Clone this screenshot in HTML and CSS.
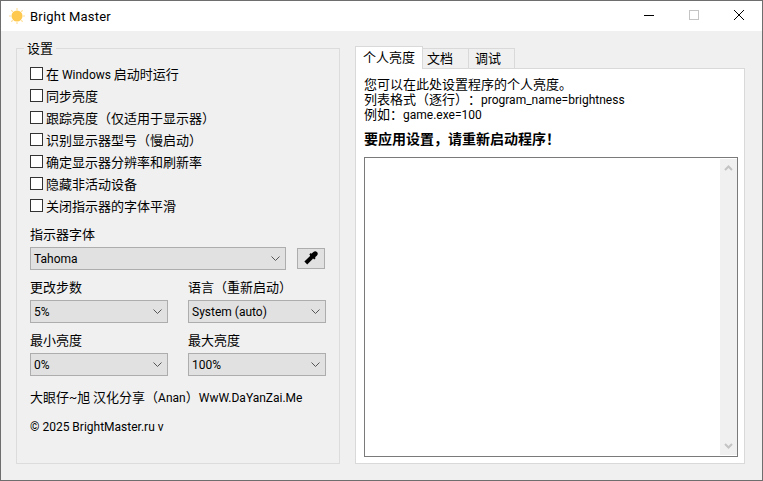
FILE: index.html
```html
<!DOCTYPE html>
<html lang="zh">
<head>
<meta charset="utf-8">
<title>Bright Master</title>
<link rel="stylesheet" href="styles.css">
</head>
<body>
<div class="window">
  <header class="titlebar">
    <svg class="sun" width="16" height="16" viewBox="0 0 16 16">
      <g stroke="#ffdd94" stroke-width="1.200" stroke-linecap="round">
        <path d="M8 .5v1M8 14.500v1M.5 8h1M14.500 8h1M2.700 2.700l.7.7M12.600 12.600l.7.7M2.700 13.300l.7-.7M12.600 3.400l.7-.7"/>
      </g>
      <circle cx="8" cy="8" r="5.500" fill="#ffc94f"/>
    </svg>
    <span class="app-name">Bright Master</span>
    <div class="controls">
      <svg width="12" height="12" viewBox="0 0 12 12"><path d="M1 6.500h10" stroke="#000" fill="none"/></svg>
      <svg width="12" height="12" viewBox="0 0 12 12"><rect x="1.500" y="1.500" width="9" height="9" stroke="#c4c4c4" fill="none"/></svg>
      <svg width="12" height="12" viewBox="0 0 12 12"><path d="M1 1l10 10M11 1L1 11" stroke="#000" fill="none"/></svg>
    </div>
  </header>
  <main class="content">
    <fieldset class="group">
      <legend class="group-title">设置</legend>
      <div class="checks">
        <label class="check"><input type="checkbox"><span>在 <span class="lat">Windows</span> 启动时运行</span></label>
        <label class="check"><input type="checkbox"><span>同步亮度</span></label>
        <label class="check"><input type="checkbox"><span>跟踪亮度（仅适用于显示器）</span></label>
        <label class="check"><input type="checkbox"><span>识别显示器型号（慢启动）</span></label>
        <label class="check"><input type="checkbox"><span>确定显示器分辨率和刷新率</span></label>
        <label class="check"><input type="checkbox"><span>隐藏非活动设备</span></label>
        <label class="check"><input type="checkbox"><span>关闭指示器的字体平滑</span></label>
      </div>
      <div class="field-label first">指示器字体</div>
      <div class="font-row">
        <div class="combo wide"><span>Tahoma</span><svg class="chev" width="9" height="5" viewBox="0 0 9 5"><path d="M.5.500l4 4 4-4" fill="none" stroke="#555"/></svg></div>
        <button class="pick" type="button" aria-label="选择颜色">
          <svg class="dropper" width="14" height="14" viewBox="0 0 14 14" fill="none" stroke="#000">
            <path d="M1.800 12L7.500 6.300" stroke-width="4"/>
            <path d="M8.500 5.200l2.600-2.400" stroke-width="5" stroke-linecap="round"/>
            <path d="M6 2.800l5 5" stroke-width="2"/>
          </svg>
        </button>
      </div>
      <div class="grid">
        <div class="cell">
          <div class="field-label">更改步数</div>
          <div class="combo"><span>5%</span><svg class="chev" width="9" height="5" viewBox="0 0 9 5"><path d="M.5.500l4 4 4-4" fill="none" stroke="#555"/></svg></div>
        </div>
        <div class="cell">
          <div class="field-label">语言（重新启动）</div>
          <div class="combo"><span>System (auto)</span><svg class="chev" width="9" height="5" viewBox="0 0 9 5"><path d="M.5.500l4 4 4-4" fill="none" stroke="#555"/></svg></div>
        </div>
        <div class="cell">
          <div class="field-label">最小亮度</div>
          <div class="combo"><span>0%</span><svg class="chev" width="9" height="5" viewBox="0 0 9 5"><path d="M.5.500l4 4 4-4" fill="none" stroke="#555"/></svg></div>
        </div>
        <div class="cell">
          <div class="field-label">最大亮度</div>
          <div class="combo"><span>100%</span><svg class="chev" width="9" height="5" viewBox="0 0 9 5"><path d="M.5.500l4 4 4-4" fill="none" stroke="#555"/></svg></div>
        </div>
      </div>
      <div class="note">大眼仔<span class="lat">~</span>旭 汉化分享（<span class="lat">Anan</span>）<span class="lat">WwW.DaYanZai.Me</span></div>
      <div class="note lat">© 2025 BrightMaster.ru v</div>
    </fieldset>
    <section class="side">
      <div class="tabs">
        <div class="tab active">个人亮度</div>
        <div class="tab second">文档</div>
        <div class="tab third">调试</div>
      </div>
      <div class="panel">
        <p class="help">您可以在此处设置程序的个人亮度。<br>列表格式（逐行）：<span class="lat">program_name=brightness</span><br>例如：<span class="lat">game.exe=100</span></p>
        <p class="warn">要应用设置，请重新启动程序！</p>
        <div class="editor">
          <div class="scrollbar">
            <svg width="9" height="6" viewBox="0 0 9 6"><path d="M1 5l3.500-3.500L8 5" fill="none" stroke="#c4c4c4" stroke-width="2"/></svg>
            <svg width="9" height="6" viewBox="0 0 9 6"><path d="M1 1l3.500 3.500L8 1" fill="none" stroke="#c4c4c4" stroke-width="2"/></svg>
          </div>
        </div>
      </div>
    </section>
  </main>
</div>
</body>
</html>
```
FILE: styles.css
```css
* { box-sizing: border-box; }
html, body { margin: 0; height: 100%; }
body {
  font-family: "Noto Sans CJK SC", "Noto Sans", sans-serif;
  font-size: 13px;
  color: #000;
  overflow: hidden;
  text-spacing-trim: space-all;
}
.lat {
  font-family: Roboto, "Noto Sans CJK SC", sans-serif;
  font-size: 12px;
  line-height: 1;
}
.window {
  height: 481px;
  width: 763px;
  border: 1px solid #6e6e6e;
  background: #f0f0f0;
  display: flex;
  flex-direction: column;
}
.titlebar {
  height: 30px;
  background: #fff;
  display: flex;
  align-items: center;
  padding-left: 8px;
}
.sun { flex: none; margin-bottom: 1px; }
.app-name {
  margin-left: 5px;
  font-family: Roboto, sans-serif;
  font-size: 13px;
  letter-spacing: .2px;
}
.controls {
  margin-left: auto;
  display: flex;
  gap: 33px;
  padding-right: 17px;
  padding-bottom: 2px;
  align-items: center;
}
.content {
  flex: 1;
  display: flex;
  align-items: stretch;
  padding: 7px 17px 16px 15px;
  gap: 15px;
  min-height: 0;
}
.group {
  width: 324px;
  margin: 0;
  padding: 0 13px;
  border: 1px solid #dcdcdc;
  min-width: 0;
}
.group-title {
  margin-left: -6px;
  padding: 0 3px;
  line-height: 20px;
  height: 20px;
}
.checks { padding-top: 4px; }
.check {
  display: flex;
  align-items: center;
  height: 22px;
  gap: 3px;
  white-space: nowrap;
}
.check input {
  appearance: none;
  margin: 0;
  width: 13px;
  height: 13px;
  border: 1px solid #333;
  background: #fff;
  flex: none;
}
.field-label {
  height: 18px;
  line-height: 18px;
  margin-top: 8px;
  margin-bottom: 4px;
  white-space: nowrap;
}
.field-label.first { margin-top: 9px; }
.font-row {
  display: flex;
  align-items: center;
  gap: 11px;
}
.combo {
  display: flex;
  align-items: center;
  justify-content: space-between;
  height: 23px;
  border: 1px solid #adadad;
  background: #e1e1e1;
  padding: 0 5px 0 3px;
  font-family: Roboto, sans-serif;
  font-size: 12px;
}
.combo.wide { width: 256px; }
.chev { flex: none; }
.pick {
  width: 28px;
  height: 21px;
  padding: 0;
  border: 1px solid #adadad;
  background: #e1e1e1;
  display: flex;
  align-items: center;
  justify-content: center;
}
.dropper { margin-bottom: 1px; }
.grid {
  display: grid;
  grid-template-columns: 138px 138px;
  column-gap: 20px;
}
.note {
  margin-top: 12px;
  height: 18px;
  line-height: 18px;
  white-space: nowrap;
}
.side {
  width: 390px;
  display: flex;
  flex-direction: column;
  padding-top: 8px;
}
.tabs { display: flex; align-items: flex-end; position: relative; z-index: 1; margin-bottom: -1px; }
.tab {
  height: 21px;
  line-height: 18px;
  border: 1px solid #d9d9d9;
  border-left: 0;
  background: #f0f0f0;
}
.tab.active {
  height: 23px;
  line-height: 19px;
  width: 68px;
  padding: 0 7px;
  border-left: 1px solid #d9d9d9;
  border-bottom: 0;
  background: #fff;
}
.tab.second { width: 45px; padding-left: 4px; border-right: 0; }
.tab.third { width: 47px; padding-left: 6px; border-left: 1px solid #d9d9d9; }
.panel {
  flex: 1;
  display: flex;
  flex-direction: column;
  background: #fff;
  border: 1px solid #d9d9d9;
  padding: 7px 6px 6px 8px;
  min-height: 0;
}
.help { margin: 0; line-height: 15px; white-space: nowrap; }
.warn { margin: 8px 0 0; font-size: 14px; line-height: 18px; font-weight: 700; }
.editor {
  flex: 1;
  margin-top: 10px;
  border: 1px solid #7a7a7a;
  background: #fff;
  padding: 1px 0;
  display: flex;
  justify-content: flex-end;
}
.scrollbar {
  width: 17px;
  background: #f0f0f0;
  display: flex;
  flex-direction: column;
  align-items: center;
  justify-content: space-between;
  padding: 6px 0;
}
```
